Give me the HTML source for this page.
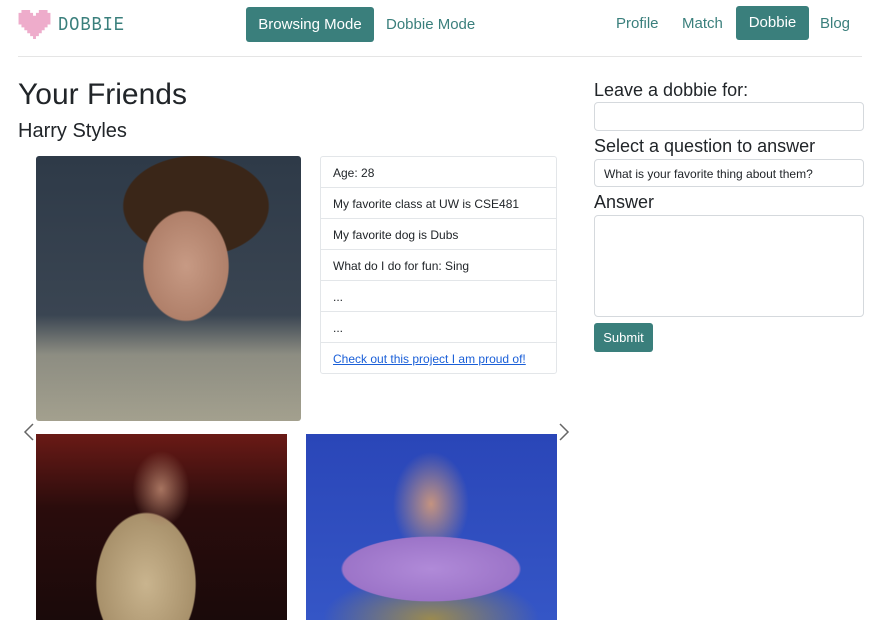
<!DOCTYPE html>
<html><head><style>
*{box-sizing:border-box;margin:0;padding:0}
body{width:880px;height:620px;overflow:hidden;background:#fff;font-family:"Liberation Sans",sans-serif;color:#212529;position:relative}
.a{position:absolute}
.teal{color:#3a7f7c}
.btn{background:#3a7f7c;color:#fff;border-radius:3px}
.li{position:absolute;left:320px;width:237px;height:32px;border:1px solid #e3e6e9;font-size:12px;padding:9px 12px 0}
.box{position:absolute;left:594px;width:270px;border:1px solid #d5d9dd;border-radius:4px}
</style></head><body>
<svg class="a" style="left:18px;top:10px" width="33" height="29" viewBox="0 0 11 10"><path fill="#eeaccb" d="M1 0h3v1h1v1h1V1h1V0h3v1h1v4h-1v1h-1v1H8v1H7v1H6v1H5V9H4V8H3V7H2V6H1V5H0V1h1z"/></svg>
<div class="a teal" style="left:58px;top:14px;font-family:'Liberation Mono',monospace;font-size:19px;letter-spacing:1px;transform:scaleX(.9);transform-origin:left">DOBBIE</div>
<div class="a btn" style="left:246px;top:7px;width:128px;height:35px;font-size:15px;line-height:35px;text-align:center">Browsing Mode</div>
<div class="a teal" style="left:386px;top:16px;font-size:15px">Dobbie Mode</div>
<div class="a teal" style="left:616px;top:15px;font-size:15px">Profile</div>
<div class="a teal" style="left:682px;top:15px;font-size:15px">Match</div>
<div class="a btn" style="left:736px;top:6px;width:73px;height:34px;font-size:15px;line-height:34px;text-align:center">Dobbie</div>
<div class="a teal" style="left:820px;top:15px;font-size:15px">Blog</div>
<div class="a" style="left:18px;top:56px;width:844px;height:1px;background:#e5e5e5"></div>
<div class="a" style="left:18px;top:78px;font-size:30px">Your Friends</div>
<div class="a" style="left:18px;top:120px;font-size:20px">Harry Styles</div>
<div class="a" style="left:36px;top:156px;width:265px;height:265px;border-radius:3px;background:radial-gradient(ellipse 70px 90px at 150px 110px,#c79a84 0,#b0806a 60%,transparent 62%),radial-gradient(ellipse 80px 55px at 160px 50px,#3a2618 0,#3a2618 90%,transparent 92%),linear-gradient(180deg,#2e3a48 0,#3a4552 60%,#8d8d82 75%,#a3a08e 100%)"></div>
<div class="a" style="left:36px;top:434px;width:251px;height:186px;background:radial-gradient(ellipse 30px 40px at 125px 55px,#a77460 0,transparent 95%),radial-gradient(ellipse 70px 100px at 110px 150px,#c9b48e 0,#a8916b 70%,transparent 72%),linear-gradient(180deg,#6a1a16 0,#2a0c0c 40%,#1a0a0a 100%)"></div>
<div class="a" style="left:306px;top:434px;width:251px;height:186px;background:radial-gradient(ellipse 110px 40px at 125px 135px,#b08ad8 0,#9c74c8 80%,transparent 82%),radial-gradient(ellipse 40px 55px at 125px 70px,#c49380 0,transparent 95%),radial-gradient(ellipse 120px 50px at 125px 185px,#9a8a50 0,transparent 90%),linear-gradient(180deg,#2a46b8 0,#3556c6 100%)"></div>
<svg class="a" style="left:22px;top:422px" width="14" height="20"><path d="M11 2L3 10l8 8" fill="none" stroke="#666" stroke-width="1.5"/></svg>
<svg class="a" style="left:557px;top:422px" width="14" height="20"><path d="M3 2l8 8-8 8" fill="none" stroke="#666" stroke-width="1.5"/></svg>
<div class="li" style="top:156px;border-radius:3px 3px 0 0">Age: 28</div>
<div class="li" style="top:187px">My favorite class at UW is CSE481</div>
<div class="li" style="top:218px">My favorite dog is Dubs</div>
<div class="li" style="top:249px">What do I do for fun: Sing</div>
<div class="li" style="top:280px">...</div>
<div class="li" style="top:311px">...</div>
<div class="li" style="top:342px;border-radius:0 0 3px 3px;color:#1a5fd8;text-decoration:underline">Check out this project I am proud of!</div>
<div class="a" style="left:594px;top:80px;font-size:18px">Leave a dobbie for:</div>
<div class="box" style="top:102px;height:29px"></div>
<div class="a" style="left:594px;top:136px;font-size:18px">Select a question to answer</div>
<div class="box" style="top:159px;height:28px;font-size:12px;padding:7px 9px">What is your favorite thing about them?</div>
<div class="a" style="left:594px;top:192px;font-size:18px">Answer</div>
<div class="box" style="top:215px;height:102px"></div>
<div class="a btn" style="left:594px;top:323px;width:59px;height:29px;font-size:13px;line-height:29px;text-align:center">Submit</div>
</body></html>
